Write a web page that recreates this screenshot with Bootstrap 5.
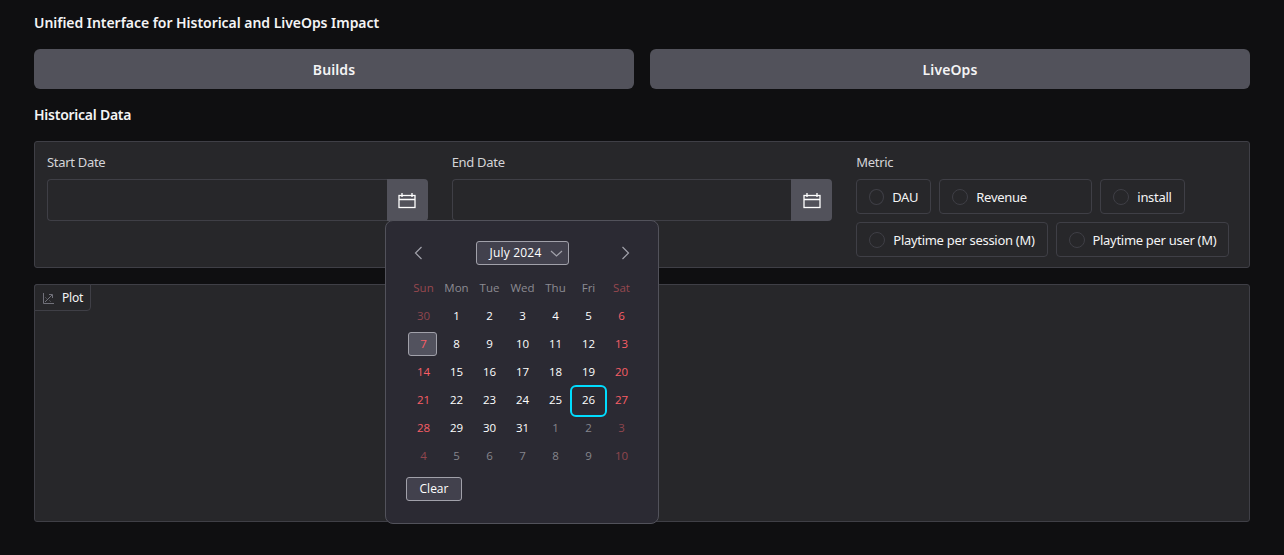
<!DOCTYPE html>
<html lang="en">
<head>
  <meta charset="UTF-8">
  <meta name="viewport" content="width=device-width, initial-scale=1.0">
  <title>Unified Interface</title>
  <link href="https://cdn.jsdelivr.net/npm/bootstrap@5.3.0/dist/css/bootstrap.min.css" rel="stylesheet">
  <style>
    body {
      background: #0f0f11;
      color: #f4f4f5;
      font-family: "Noto Sans", sans-serif;
      font-size: 13px;
      letter-spacing: -0.3px;
    }
    .page-wrap { padding: 14px 34px 33px; }
    .page-title { font-size: 14px; font-weight: 600; line-height: 18px; margin: 0 0 17px; letter-spacing: -0.04px; }
    .top-btn {
      height: 40px; border: 0; border-radius: 6px; background: #52525b;
      color: #f4f4f5; font-size: 14px; font-weight: 600; flex: 1 1 0; letter-spacing: 0.1px;
    }
    .sub-title { font-size: 14px; font-weight: 600; line-height: 18px; margin: 17px 0 17px; letter-spacing: -0.25px; }
    .panel-box { background: #27272a; border: 1px solid #3f3f46; border-radius: 3px; }
    .filter-box { height: 127px; padding: 11px 12px 12px; display: grid; grid-template-columns: repeat(3, 1fr); gap: 24px; margin-bottom: 16px; }
    .field-label { color: #d4d4d8; line-height: 18px; margin-bottom: 8px; display: block; }
    .date-group { position: relative; display: flex; height: 42px; }
    .date-input {
      flex: 1 1 auto; min-width: 0; background: #27272a; color: #fff;
      border: 1px solid #3f3f46; border-right: 0; border-radius: 4px 0 0 4px;
    }
    .cal-btn {
      width: 41px; background: #52525b; border: 0; border-radius: 0 4px 4px 0;
      display: flex; align-items: center; justify-content: center; padding: 0;
    }
    .radio-wrap { display: flex; flex-wrap: wrap; gap: 8px; }
    .radio-item {
      height: 35px; display: flex; align-items: center; gap: 8px; padding: 0 12px;
      border: 1px solid #3f3f46; border-radius: 4px; background: #27272a; color: #f4f4f5; margin: 0;
    }
    .radio-dot { width: 16px; height: 16px; border-radius: 50%; border: 1px solid #3f3f46; background: #27272a; }
    .radio-item span:last-child { margin-top: 2px; }
    .narrow-item { width: 75px; }
    .wide-item { width: 153px; }
    .plot-box { height: 238px; position: relative; }
    .plot-tag {
      position: absolute; left: -1px; top: -1px; width: 57px; height: 27px;
      display: flex; align-items: center; gap: 8px; padding: 1px 0 0 8px;
      border: 1px solid #3f3f46; border-radius: 3px 0 4px 0; background: #27272a;
      font-size: 12px; color: #f4f4f5; letter-spacing: -0.2px;
    }
    .cal-pop {
      position: absolute; top: 41px; left: 338px; width: 274px; height: 304px; z-index: 5;
      background: #2b2a33; border: 1px solid #52525b; border-radius: 8px;
      font-family: "Open Sans", sans-serif; letter-spacing: 0; font-size: 11.5px; color: #fff;
      padding: 20px 21px 0 20px;
    }
    .cal-head { display: flex; align-items: center; justify-content: space-between; height: 24px; padding: 0 7px 0 8px; }
    .cal-head svg { display: block; }
    .month-pick {
      width: 93px; height: 24px; display: flex; align-items: center; justify-content: center; gap: 8px; padding-left: 8px;
      background: #42414d; border: 1px solid #a1a1aa; border-radius: 3px; font-size: 12px; letter-spacing: 0.2px;
    }
    .cal-grid { display: grid; grid-template-columns: repeat(7, 33px); grid-auto-rows: 28px; margin: 9px 0 0 1px; }
    .cal-grid div { display: flex; align-items: center; justify-content: center; position: relative; }
    .dow { color: #8b8b92; }
    .dow-we { color: #97484f; }
    .we { color: #f95e66; }
    .mute { color: #85858c; }
    .mute-we { color: #90464e; }
    .sel-day::before {
      content: ""; position: absolute; left: 1px; top: 2px; width: 29px; height: 24px; z-index: 0;
      background: #52525e; border: 1px solid #a1a1aa; border-radius: 3px;
    }
    .today-day::before {
      content: ""; position: absolute; left: -2px; top: -1px; width: 37px; height: 32px;
      border: 2px solid #00ddff; border-radius: 6px;
    }
    .cal-grid span { position: relative; }
    .clear-btn {
      width: 56px; height: 24px; padding: 0; margin-top: 7px;
      background: #42414d; color: #fff; border: 1px solid #a1a1aa; border-radius: 3px; font-size: 12px;
    }
  </style>
</head>
<body>
  <div class="page-wrap">
    <h1 class="page-title">Unified Interface for Historical and LiveOps Impact</h1>
    <div class="d-flex gap-3">
      <button class="top-btn">Builds</button>
      <button class="top-btn">LiveOps</button>
    </div>
    <h2 class="sub-title">Historical Data</h2>

    <div class="panel-box filter-box">
      <div>
        <label class="field-label">Start Date</label>
        <div class="date-group">
          <input class="date-input" type="text">
          <button class="cal-btn" id="startCal"></button>
          <!-- open date popup -->
          <div class="cal-pop">
            <div class="cal-head">
              <svg width="10" height="14" viewBox="0 0 10 14" fill="none" stroke="#a1a1aa" stroke-width="1.2"><path d="M7.500 1 1.500 7l6 6"/></svg>
              <div class="month-pick">July 2024
                <svg width="13" height="7" viewBox="0 0 13 7" fill="none" stroke="#a1a1aa" stroke-width="1.2"><path d="M1 1l5.500 5L12 1"/></svg>
              </div>
              <svg width="10" height="14" viewBox="0 0 10 14" fill="none" stroke="#a1a1aa" stroke-width="1.2"><path d="M2.500 1l6 6-6 6"/></svg>
            </div>
            <div class="cal-grid" id="calGrid"></div>
            <button class="clear-btn">Clear</button>
          </div>
        </div>
      </div>
      <div>
        <label class="field-label">End Date</label>
        <div class="date-group">
          <input class="date-input" type="text">
          <button class="cal-btn" id="endCal"></button>
        </div>
      </div>
      <div>
        <label class="field-label">Metric</label>
        <div class="radio-wrap">
          <label class="radio-item narrow-item"><span class="radio-dot"></span><span>DAU</span></label>
          <label class="radio-item wide-item"><span class="radio-dot"></span><span>Revenue</span></label>
          <label class="radio-item"><span class="radio-dot"></span><span>install</span></label>
          <label class="radio-item"><span class="radio-dot"></span><span>Playtime per session (M)</span></label>
          <label class="radio-item"><span class="radio-dot"></span><span>Playtime per user (M)</span></label>
        </div>
      </div>
    </div>

    <div class="panel-box plot-box">
      <div class="plot-tag">
        <svg width="11" height="11" viewBox="0 0 11 11" fill="none" stroke="#71717a" stroke-width="1"><path d="M.5 0v10.500H11M2 9l7-7M6 1.500h3.500V5M2.500 4.500l1 1M6.500 7.500l1 1"/></svg>
        <span>Plot</span>
      </div>
    </div>
  </div>

  <script>
    // calendar icon is the same on both date fields
    const calIcon = '<svg width="18" height="18" viewBox="0 0 18 18" fill="none" stroke="#fff" stroke-width="1.300"><rect x="1" y="4.500" width="16" height="12"/><path d="M1 8.500h16M4 2v4M14 2v4"/></svg>';
    document.getElementById('startCal').innerHTML = calIcon;
    document.getElementById('endCal').innerHTML = calIcon;

    const grid = document.getElementById('calGrid');
    const names = ['Sun', 'Mon', 'Tue', 'Wed', 'Thu', 'Fri', 'Sat'];
    const days = [30,1,2,3,4,5,6,7,8,9,10,11,12,13,14,15,16,17,18,19,20,21,22,23,24,25,26,27,28,29,30,31,1,2,3,4,5,6,7,8,9,10];
    let html = '';
    names.forEach((n, i) => {
      html += `<div class="${i % 6 === 0 ? 'dow-we' : 'dow'}"><span>${n}</span></div>`;
    });
    days.forEach((d, i) => {
      const weekend = i % 7 === 0 || i % 7 === 6;
      const outside = i === 0 || i > 31;
      let cls = outside ? (weekend ? 'mute-we' : 'mute') : (weekend ? 'we' : '');
      if (i === 7) cls += ' sel-day';
      if (i === 26) cls += ' today-day';
      html += `<div class="${cls}"><span>${d}</span></div>`;
    });
    grid.innerHTML = html;
  </script>
  <script src="https://cdn.jsdelivr.net/npm/bootstrap@5.3.0/dist/js/bootstrap.bundle.min.js"></script>
</body>
</html>
